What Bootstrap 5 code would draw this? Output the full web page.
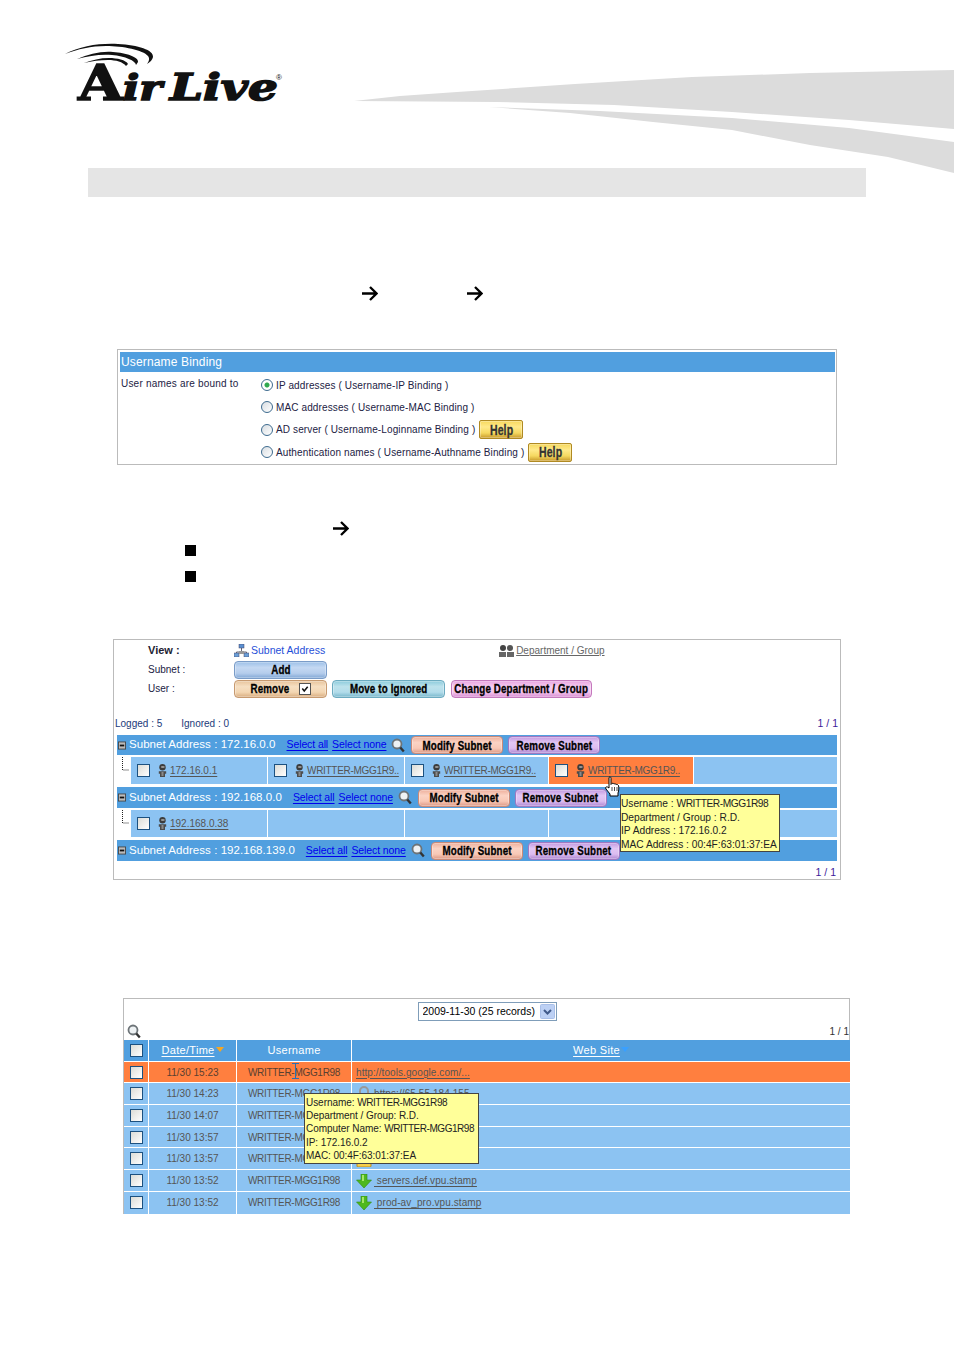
<!DOCTYPE html>
<html lang="en"><head><meta charset="utf-8"><title>AirLive</title>
<link rel="stylesheet" href="https://cdn.jsdelivr.net/npm/bootstrap@5.3.0/dist/css/bootstrap.min.css">
<style>
body{margin:0;background:#fff;font-family:"Liberation Sans",Arial,sans-serif;font-size:10px;color:#223;width:954px;height:1350px;overflow:hidden}
.sheet-top{height:168px}
.logo-mark{margin:30px 0 0 65px;flex:none}
.swoosh{margin:70px 0 0 auto;flex:none}
.band{height:29px;margin:0 88px;background:#e5e5e5}
.arrow-row{height:17px}
.ar1{margin-top:88px;padding-left:361px}
.ar1 svg+svg{margin-left:88px}
.ar2{margin-top:55px;padding-left:332px}
.sq-list{margin:8px 0 0 185px;gap:15px}
.sq{width:11px;height:11px;background:#000}
.frame{border:1px solid #bbb;background:#fff;position:relative}
.bind-frame{margin:47px 0 0 117px;width:720px;height:116px;padding:2px 1px 2px 2px}
.bar{background:#519fdf;color:#fff;font-size:12px;letter-spacing:.15px}
.bind-head{height:20px;padding-left:1px;line-height:20px}
.bind-body{padding:2px 0 0 1px;color:#224}
.bind-lab{width:140px;letter-spacing:.2px;padding-top:2px;flex:none}
.bind-opt{height:22.3px;letter-spacing:.12px;gap:3px}
.bind-opt .skin{margin-left:1px}
.form-check-input.rad{width:12px;height:12px;margin:0;border:1px solid #3d6b8f;background:linear-gradient(135deg,#d8dde2,#fff);flex:none}
.form-check-input.rad:checked[type=radio]{background:radial-gradient(circle,#2fa84f 0 2px,#fff 3px);border-color:#3d6b8f;box-shadow:none}
.form-check-input.tick{width:13px;height:13px;margin:0;border:1px solid #1c5180;border-radius:0;background:linear-gradient(135deg,#dcdcd6,#fff);flex:none}
.form-check-input.tick:checked[type=checkbox]{width:12px;height:12px;background:url("data:image/svg+xml,%3Csvg xmlns='http://www.w3.org/2000/svg' viewBox='0 0 13 13'%3E%3Cpath d='M3 6l2.500 3L10 3.500' fill='none' stroke='%23111' stroke-width='2'/%3E%3C/svg%3E"),#fff;border-color:#555}
.skin{display:inline-flex;align-items:center;justify-content:center;gap:3px;height:18px;border-radius:4px;border:1px solid;box-shadow:inset 0 0 0 1px rgba(255,255,255,.3);font-weight:700;font-size:13px;letter-spacing:.2px;color:#000;-webkit-text-stroke:.35px #000;flex:none;line-height:1;white-space:nowrap}
.skin b{display:inline-block;transform:scaleX(.75);font-weight:700}
.sk-blue{background:linear-gradient(#9cc0e8,#c4d8f2 35%,#b5cdec 70%,#82a8d6);border-color:#7a9cc8}
.sk-tan{background:linear-gradient(#e8c49c,#f6dfc2 35%,#f3d6b2 70%,#d9ad80);border-color:#c79a70;padding-right:6px}
.sk-cyan{background:linear-gradient(#8ccbdc,#bde2ec 35%,#b2dcea 70%,#78b8cc);border-color:#6cabc0}
.sk-pink{background:linear-gradient(#e8a4e0,#f6ccf0 35%,#f4c4ee 70%,#d88ed2);border-color:#c479bd}
.sk-salmon{background:linear-gradient(#eeb09c,#fbd3c4 35%,#f8c8b6 70%,#dd9a86);border-color:#c98a78}
.sk-violet{background:linear-gradient(#c39ae0,#e2c6f4 35%,#dcbcf0 70%,#b088d2);border-color:#9f78c2}
.sk-gold{height:19px;width:44px;background:linear-gradient(#f6d85c,#ffe98a 35%,#f5d860 70%,#c89a2a);border-color:#b08a22;border-radius:2px;font-size:14px;color:#333;-webkit-text-stroke:.3px #333}
.w93{width:93px}.w113{width:113px}.w141{width:141px}.w92{width:92px}
.gap5{margin-left:5px}.gap6{margin-left:6px}.gap11{margin-left:11px}.gap4{margin-left:4px}
.user-frame{margin:57px 0 0 113px;width:728px;height:241px;padding-top:1px}
.view-grid{padding-left:34px;color:#224}
.view-row{height:19px}
.view-lab{width:86px;flex:none}
.view-big{font-weight:700;font-size:11px;color:#223}
.view-sub{color:#1f4fd8;font-size:10.500px;margin-left:2px}
.dept{margin-left:174px;color:#666;font-size:10px;text-decoration:underline;gap:2px}
.tally{margin:18px 2px 0 1px;height:16px;color:#1b3a7a;font-size:10px}
.tally span+span{margin-left:19px}
.pager{color:#3b1a9a;font-size:10.500px}
.sub-bar{margin:3px 3px 0;height:21px;padding-left:1px;font-size:11.500px;letter-spacing:.05px}
.sub-first{height:20px}
.tog{margin-right:3px;flex:none}
.sub-bar a{color:#00e;font-size:10.500px;letter-spacing:-.1px;text-underline-offset:2px}
.cells{margin:2px 3px 0;height:27px}
.tree{width:14px;flex:none}
.cellx{background:#8cc3f2;margin-right:1px;padding-left:6px;gap:8px;flex:none}
.cellx a,.rowlink{color:#555;text-underline-offset:2px}
.who{gap:3px}
.wr{letter-spacing:-.3px}
.c136{width:136px}.c143{width:143px}.c144{width:144px}
.on{background:#ff7f3f}
.tip{position:absolute;background:#ffff99;border:1px solid #444;color:#222;font-size:10.200px;z-index:5;white-space:nowrap}
.tip .wr{letter-spacing:-.45px}
.tip1{left:506px;top:154px;width:160px;height:58px;padding:2px 0;line-height:13px}
.tip1 div{height:13.500px}
.tip2{left:180px;top:94px;width:175px;height:71px;padding:2px 1px;line-height:13.200px;font-size:10px;letter-spacing:-.05px}
.tip2 .wr{letter-spacing:-.45px}
.hand{position:absolute;left:491px;top:136px;z-index:6}
.log-frame{margin:118px 0 0 123px;width:727px;height:216px;border-bottom:0}
.sel-wrap{height:23px;padding:3px 0 0 1px}
.form-select.pick{width:139px;height:19px;padding:0 0 0 4px;font-size:10.500px;border:1px solid #7f9db9;border-radius:0;color:#000;font-family:"Liberation Sans",sans-serif;background:#fff url("data:image/svg+xml,%3Csvg xmlns='http://www.w3.org/2000/svg' viewBox='0 0 15 15'%3E%3Crect x='.5' y='.5' width='14' height='14' rx='1' fill='%23bcd0f4' stroke='%23a9bfe8'/%3E%3Cpath d='M4 6l3.500 3.500L11 6' fill='none' stroke='%23405a8a' stroke-width='2'/%3E%3C/svg%3E") no-repeat right 1px center/15px 15px}
.log-tools{height:18px;padding-left:3px}
.log-frame .pager{color:#333;font-size:10px}
.log-tbl{margin:0;font-size:10px;table-layout:fixed;width:726px;border-collapse:separate;border-spacing:0}
.log-tbl th,.log-tbl td{padding:0;height:21.700px;border:0;border-bottom:1px solid #fff;border-right:1px solid #fff;background:#8cc3f2;color:#555;text-align:center;vertical-align:middle;box-shadow:none;font-weight:400}
.log-tbl th{background:#519fdf;color:#fff;font-size:11px;letter-spacing:.3px}
.log-tbl th a{color:#fff;text-underline-offset:2px}
.log-tbl tr.on td{background:#ff7f3f;color:#5a4030}
.log-tbl .site{text-align:left;padding-left:4px;white-space:nowrap;overflow:hidden;letter-spacing:.08px}
.log-tbl tr:last-child td{border-bottom:0}
.log-tbl td:last-child,.log-tbl th:last-child{border-right:0}
.ck-col{width:25px}.dt-col{width:88px}.us-col{width:115px}
.form-check-input.tick.mid{display:block;margin:0 auto}
.caret-dn{display:inline-block;width:0;height:0;border:4px solid transparent;border-top:5px solid;border-bottom:0;margin:0 0 2px 1px}
.c-or{color:#f6a623}.c-sky{color:#3aa0ff}
.site-ic{margin-right:2px}
.beam{position:absolute;left:168px;top:64px;z-index:4}
</style></head><body>
<svg width="0" height="0" class="position-absolute"><defs>
<symbol id="mag" viewBox="0 0 14 15"><circle cx="6" cy="6" r="4.500" fill="#eef2f4" stroke="#6d7478" stroke-width="1.800"/><path d="M9.300 9.500l3.500 4" stroke="#333" stroke-width="2.400"/></symbol>
<symbol id="man" viewBox="0 0 9 13"><circle cx="4.500" cy="3.200" r="3.200" fill="#3c3c3c"/><ellipse cx="4.800" cy="3" rx="2" ry="1" fill="#9a9a9a"/><path d="M.8 7.200h7.400v2.600H7V13H2V9.800H.8z" fill="#4c4c4c"/><path d="M3.500 8h2v4h-2z" fill="#8a8a8a"/></symbol>
<symbol id="minus" viewBox="0 0 9 9"><rect x=".5" y=".5" width="8" height="8" fill="#bbb" stroke="#444"/><path d="M2 4.500h5" stroke="#111" stroke-width="2"/></symbol>
<symbol id="dots" viewBox="0 0 8 16"><path d="M1.500 0v13H8" fill="none" stroke="#222" stroke-dasharray="1 1"/></symbol>
<symbol id="lock" viewBox="0 0 16 16"><path d="M4 8V5a4 4 0 018 0v3" fill="none" stroke="#999" stroke-width="2"/><rect x="1" y="8" width="14" height="8" rx="1" fill="#f6cf4a" stroke="#b98a1c"/></symbol>
<symbol id="grn" viewBox="0 0 16 14"><path d="M5 0h6v6h4.500L8 14 .5 6H5z" fill="#4fb81e" stroke="#2f8a10" stroke-width=".6"/><path d="M6 1h2v6H6z" fill="#a5e66a"/></symbol>
<symbol id="arw" viewBox="0 0 17 17"><path d="M1 8.500h14M9 2l6.500 6.500L9 15" fill="none" stroke="#000" stroke-width="2.300"/></symbol>
</defs></svg>

<div class="sheet-top d-flex">
<svg class="logo-mark" width="225" height="90" viewBox="65 30 225 90">
<path d="M65 54C80 46 100 43 118 44c20 1 36 6 35 13-.5 3-3 5-6 7 2-3 3-5 1-8-5-6-25-10-42-10-15 0-28 3-41 8z" fill="#111"/>
<path d="M77 59c12-5 24-8 36-7 13 1 26 5 25 10l-2 3c0-4-11-9-24-10-12-1-23 1-35 4z" fill="#111"/>
<path d="M84 63c8-3 16-5 25-5 8 0 17 2 19 6l-2 2c-3-4-10-6-18-6-8 0-16 1-24 3z" fill="#111"/>
<text x="78" y="100" font-family="DejaVu Serif" font-weight="700" font-size="49" textLength="45" lengthAdjust="spacingAndGlyphs" fill="#111" stroke="#111" stroke-width="1.500">A</text>
<text x="123" y="100" font-family="DejaVu Serif" font-weight="700" font-style="italic" font-size="36" textLength="39" lengthAdjust="spacingAndGlyphs" fill="#111" stroke="#111" stroke-width="1.600">ir</text>
<text x="170" y="100" font-family="DejaVu Serif" font-weight="700" font-style="italic" font-size="37" textLength="108" lengthAdjust="spacingAndGlyphs" fill="#111" stroke="#111" stroke-width="1.600">Live</text>
<text x="276" y="80" font-family="Liberation Sans" font-size="8" fill="#111">®</text>
</svg>
<svg class="swoosh" width="602" height="104" viewBox="352 70 602 104"><path d="M354 101L400 96 457 92 575 84 692 77 810 73 954 70V129L849 120 732 112 614 105 497 102z" fill="#dcdcdc"/><path d="M489 107L600 111 732 118 849 128 954 142V173L888 157 810 145 732 130 653 122 570 113z" fill="#dcdcdc"/></svg>
</div>
<div class="band"></div>

<div class="arrow-row ar1"><svg width="17" height="17"><use href="#arw"/></svg><svg width="17" height="17"><use href="#arw"/></svg></div>

<div class="frame bind-frame">
<div class="bar bind-head">Username Binding</div>
<div class="bind-body d-flex">
<div class="bind-lab">User names are bound to</div>
<div class="flex-grow-1">
<div class="bind-opt d-flex align-items-center"><input class="form-check-input rad" type="radio" name="b" checked>IP addresses ( Username-IP Binding )</div>
<div class="bind-opt d-flex align-items-center"><input class="form-check-input rad" type="radio" name="b">MAC addresses ( Username-MAC Binding )</div>
<div class="bind-opt d-flex align-items-center"><input class="form-check-input rad" type="radio" name="b">AD server ( Username-Loginname Binding )<span class="skin sk-gold"><b>Help</b></span></div>
<div class="bind-opt d-flex align-items-center"><input class="form-check-input rad" type="radio" name="b">Authentication names ( Username-Authname Binding )<span class="skin sk-gold"><b>Help</b></span></div>
</div></div></div>

<div class="arrow-row ar2"><svg width="17" height="17"><use href="#arw"/></svg></div>
<div class="d-flex flex-column sq-list"><div class="sq"></div><div class="sq"></div></div>

<div class="frame user-frame">
<div class="view-grid">
<div class="view-row d-flex align-items-center"><div class="view-lab view-big">View :</div>
<svg width="15" height="13" viewBox="0 0 15 13"><path d="M7.500 4v4M2.500 10V8h10v2" fill="none" stroke="#667"/><rect x="5" y="0" width="5" height="4" fill="#5a8fd0" stroke="#446" stroke-width=".5"/><rect x="0" y="9" width="5" height="4" fill="#6a9fd8" stroke="#446" stroke-width=".5"/><rect x="10" y="9" width="5" height="4" fill="#6a9fd8" stroke="#446" stroke-width=".5"/><rect x="5" y="7" width="5" height="3" fill="#999"/></svg>
<span class="view-sub">Subnet Address</span>
<span class="dept d-inline-flex align-items-center"><svg width="15" height="12" viewBox="0 0 15 12"><circle cx="4" cy="3" r="3" fill="#444"/><circle cx="11" cy="3" r="3" fill="#555"/><path d="M0 12V7h7v5zM8 12V7h7v5z" fill="#666"/></svg>Department / Group</span></div>
<div class="view-row d-flex align-items-center"><div class="view-lab">Subnet :</div><span class="skin sk-blue w93"><b>Add</b></span></div>
<div class="view-row d-flex align-items-center"><div class="view-lab">User :</div><span class="skin sk-tan w93"><b>Remove</b><input class="form-check-input tick" type="checkbox" checked></span><span class="skin sk-cyan w113 gap5"><b>Move to Ignored</b></span><span class="skin sk-pink w141 gap6"><b>Change Department / Group</b></span></div>
</div>
<div class="tally d-flex"><span>Logged : 5</span><span>Ignored : 0</span><span class="pager ms-auto">1 / 1</span></div>

<div class="bar sub-bar sub-first d-flex align-items-center"><svg class="tog" width="8" height="9"><use href="#minus"/></svg>Subnet Address : 172.16.0.0<a href="#" class="gap11">Select all</a><a href="#" class="gap4">Select none</a><svg class="gap5" width="14" height="15"><use href="#mag"/></svg><span class="skin sk-salmon w92 gap6"><b>Modify Subnet</b></span><span class="skin sk-violet w92 gap5"><b>Remove Subnet</b></span></div>
<div class="cells d-flex">
<div class="tree"><svg class="ms-1" width="8" height="16"><use href="#dots"/></svg></div>
<div class="cellx c136 d-flex align-items-center"><input class="form-check-input tick" type="checkbox"><span class="d-flex align-items-center who"><svg width="9" height="13"><use href="#man"/></svg><a href="#">172.16.0.1</a></span></div>
<div class="cellx c136 d-flex align-items-center"><input class="form-check-input tick" type="checkbox"><span class="d-flex align-items-center who"><svg width="9" height="13"><use href="#man"/></svg><a href="#" class="wr">WRITTER-MGG1R9..</a></span></div>
<div class="cellx c143 d-flex align-items-center"><input class="form-check-input tick" type="checkbox"><span class="d-flex align-items-center who"><svg width="9" height="13"><use href="#man"/></svg><a href="#" class="wr">WRITTER-MGG1R9..</a></span></div>
<div class="cellx c144 on d-flex align-items-center"><input class="form-check-input tick" type="checkbox"><span class="d-flex align-items-center who"><svg width="9" height="13"><use href="#man"/></svg><a href="#" class="wr">WRITTER-MGG1R9..</a></span></div>
<div class="cellx c143"></div>
</div>
<div class="bar sub-bar d-flex align-items-center"><svg class="tog" width="8" height="9"><use href="#minus"/></svg>Subnet Address : 192.168.0.0<a href="#" class="gap11">Select all</a><a href="#" class="gap4">Select none</a><svg class="gap5" width="14" height="15"><use href="#mag"/></svg><span class="skin sk-salmon w92 gap6"><b>Modify Subnet</b></span><span class="skin sk-violet w92 gap5"><b>Remove Subnet</b></span></div>
<div class="cells d-flex">
<div class="tree"><svg class="ms-1" width="8" height="16"><use href="#dots"/></svg></div>
<div class="cellx c136 d-flex align-items-center"><input class="form-check-input tick" type="checkbox"><span class="d-flex align-items-center who"><svg width="9" height="13"><use href="#man"/></svg><a href="#">192.168.0.38</a></span></div>
<div class="cellx c136"></div><div class="cellx c143"></div><div class="cellx c144"></div><div class="cellx c143"></div>
</div>
<div class="bar sub-bar d-flex align-items-center"><svg class="tog" width="8" height="9"><use href="#minus"/></svg>Subnet Address : 192.168.139.0<a href="#" class="gap11">Select all</a><a href="#" class="gap4">Select none</a><svg class="gap5" width="14" height="15"><use href="#mag"/></svg><span class="skin sk-salmon w92 gap6"><b>Modify Subnet</b></span><span class="skin sk-violet w92 gap5"><b>Remove Subnet</b></span></div>
<div class="text-end pe-1 pt-1"><span class="pager">1 / 1</span></div>
<div class="tip tip1"><div>Username : <span class="wr">WRITTER-MGG1R98</span></div><div>Department / Group : R.D.</div><div>IP Address : 172.16.0.2</div><div>MAC Address : 00:4F:63:01:37:EA</div></div>
<svg class="hand" width="17" height="21" viewBox="0 0 17 21"><path d="M4 1.500c1-1 2-.5 2 1v6l1-1c1-.5 1.500 0 2 .5 1-.5 1.500 0 2 .5 1-.3 2 .2 2.500 1 .5 2 .5 5-.5 7.500v3H5v-2L1 13c-1-1.500 0-2.500 1.500-2l1.500 1z" fill="#fff" stroke="#000"/><path d="M7 11v4M9.500 11v4M12 11v4" stroke="#000" stroke-width=".7"/></svg>
</div>

<div class="frame log-frame">
<div class="sel-wrap d-flex justify-content-center"><select class="form-select pick"><option>2009-11-30 (25 records)</option></select></div>
<div class="log-tools d-flex align-items-center justify-content-between"><svg width="14" height="15"><use href="#mag"/></svg><span class="pager">1 / 1</span></div>
<table class="table log-tbl">
<colgroup><col class="ck-col"><col class="dt-col"><col class="us-col"><col></colgroup>
<thead><tr><th><input class="form-check-input tick mid" type="checkbox"></th><th><a href="#">Date/Time</a><span class="caret-dn c-or"></span></th><th>Username</th><th><a href="#">Web Site</a><span class="caret-dn c-sky"></span></th></tr></thead>
<tbody>
<tr class="on"><td><input class="form-check-input tick mid" type="checkbox"></td><td>11/30 15:23</td><td class="wr">WRITTER-MGG1R98</td><td class="site"><a class="rowlink" href="#">http://tools.google.com/...</a></td></tr>
<tr><td><input class="form-check-input tick mid" type="checkbox"></td><td>11/30 14:23</td><td class="wr">WRITTER-MGG1R98</td><td class="site"><svg width="16" height="16" class="site-ic"><use href="#lock"/></svg><a class="rowlink" href="#">https://65.55.184.155</a></td></tr>
<tr><td><input class="form-check-input tick mid" type="checkbox"></td><td>11/30 14:07</td><td class="wr">WRITTER-MGG1R98</td><td class="site"></td></tr>
<tr><td><input class="form-check-input tick mid" type="checkbox"></td><td>11/30 13:57</td><td class="wr">WRITTER-MGG1R98</td><td class="site"></td></tr>
<tr><td><input class="form-check-input tick mid" type="checkbox"></td><td>11/30 13:57</td><td class="wr">WRITTER-MGG1R98</td><td class="site"><svg width="16" height="16"><use href="#lock"/></svg></td></tr>
<tr><td><input class="form-check-input tick mid" type="checkbox"></td><td>11/30 13:52</td><td class="wr">WRITTER-MGG1R98</td><td class="site"><svg width="16" height="14" class="site-ic"><use href="#grn"/></svg><a class="rowlink" href="#">&nbsp;servers.def.vpu.stamp</a></td></tr>
<tr><td><input class="form-check-input tick mid" type="checkbox"></td><td>11/30 13:52</td><td class="wr">WRITTER-MGG1R98</td><td class="site"><svg width="16" height="14" class="site-ic"><use href="#grn"/></svg><a class="rowlink" href="#">&nbsp;prod-av_pro.vpu.stamp</a></td></tr>
</tbody></table>
<div class="tip tip2">Username: <span class="wr">WRITTER-MGG1R98</span><br>Department / Group: R.D.<br>Computer Name: <span class="wr">WRITTER-MGG1R98</span><br>IP: 172.16.0.2<br>MAC: 00:4F:63:01:37:EA</div>
<svg class="beam" width="7" height="16" viewBox="0 0 7 16"><path d="M0 .5h7M0 15.500h7M3.500 0v16" stroke="#2a6fb0"/></svg>
</div>
<script src="https://cdn.jsdelivr.net/npm/bootstrap@5.3.0/dist/js/bootstrap.bundle.min.js"></script>
</body></html>
